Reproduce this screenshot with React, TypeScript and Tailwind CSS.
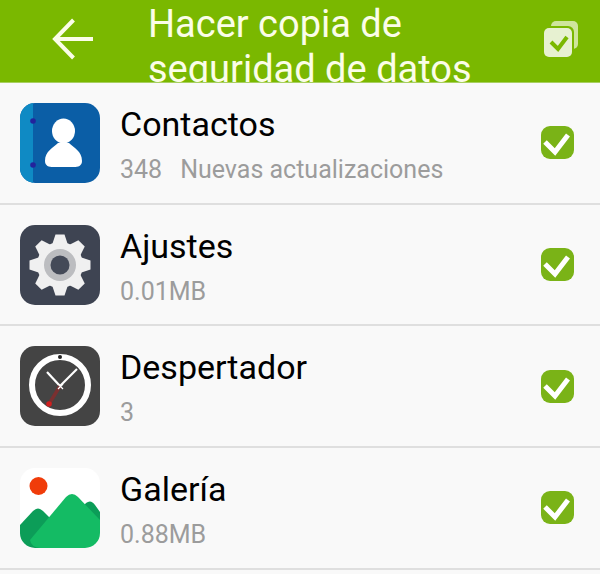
const rows = [
  { name: "Contactos", count: "348", note: "Nuevas actualizaciones", icon: <ContactsIcon /> },
  { name: "Ajustes", count: "0.01MB", icon: <SettingsIcon /> },
  { name: "Despertador", count: "3", icon: <ClockIcon /> },
  { name: "Galería", count: "0.88MB", icon: <GalleryIcon /> },
];

function ContactsIcon() {
  return (
    <svg viewBox="0 0 80 80" className="w-20 h-20 shrink-0">
      <rect width="80" height="80" rx="15" fill="#0b5ea6" />
      <path d="M15 0 A15 15 0 0 0 0 15 V65 A15 15 0 0 0 15 80 V80 H13 V0 Z" fill="#0f8ac4" />
      <circle cx="13" cy="18" r="2.8" fill="#23239c" />
      <circle cx="13" cy="62" r="2.8" fill="#23239c" />
      <ellipse cx="43.500" cy="28" rx="11.500" ry="12.500" fill="#fff" />
      <path d="M25 58 C25 48 33 45 38 40 H49 C54 45 62 48 62 58 C62 63 58 64 54 64 H33 C29 64 25 63 25 58 Z" fill="#fff" />
    </svg>
  );
}

function SettingsIcon() {
  const teeth = [0, 45, 90, 135, 180, 225, 270, 315];
  return (
    <svg viewBox="0 0 80 80" className="w-20 h-20 shrink-0">
      <rect width="80" height="80" rx="15" fill="#3e4452" />
      {teeth.map((a) => (
        <path key={a} d="M35.500 9.500 H44.500 L48 20 H32 Z" fill="#f0f0f0" transform={`rotate(${a} 40 40)`} />
      ))}
      <circle cx="40" cy="40" r="23" fill="#f0f0f0" />
      <circle cx="40" cy="40" r="16" fill="#bcbdc0" />
      <circle cx="40" cy="40" r="9.500" fill="#444a58" />
    </svg>
  );
}

function ClockIcon() {
  return (
    <svg viewBox="0 0 80 80" className="w-20 h-20 shrink-0">
      <rect width="80" height="80" rx="15" fill="#444444" />
      <circle cx="40" cy="39" r="28" fill="none" stroke="#fff" strokeWidth="6" />
      <circle cx="40" cy="11" r="2" fill="#222" />
      <path d="M40 40 L27 26" stroke="#fff" strokeWidth="2.200" />
      <path d="M40 40 L57 23" stroke="#fff" strokeWidth="2.200" />
      <path d="M40 40 L29 58" stroke="#7a3030" strokeWidth="3.500" />
      <circle cx="29" cy="58" r="2.800" fill="#d01f1f" />
      <path d="M38 38 L43 43 M43 38 L38 43" stroke="#fff" strokeWidth="1.200" />
    </svg>
  );
}

function GalleryIcon() {
  return (
    <svg viewBox="0 0 80 80" className="w-20 h-20 shrink-0">
      <rect width="80" height="80" rx="15" fill="#fff" />
      <circle cx="18.500" cy="18" r="9" fill="#f03c0a" />
      <path d="M0 57 L13 43 Q18 38 23 43 L38 58 L30 80 H15 A15 15 0 0 1 0 65 Z" fill="#0c9d58" />
      <path d="M60 42 L66 35 Q71 31 75 37 L80 44 V65 L70 60 Z" fill="#0c9d58" />
      <path d="M10 72 L46 29 Q52 23 58 29 L80 52 V65 A15 15 0 0 1 65 80 H20 Q11 79 10 72 Z" fill="#14bb64" />
    </svg>
  );
}

export default function App() {
  return (
    <div className="w-[600px] h-[574px] overflow-hidden bg-[#f9f9f9] font-['Roboto',sans-serif]">
      {/* Header bar */}
      <div className="h-[83px] bg-[#7ab800] border-b border-[#a8cf60] flex items-start overflow-hidden">
        <svg viewBox="0 0 42 42" className="w-[42px] h-[42px] ml-[52px] mt-[18px] shrink-0">
          <path d="M3 21 H41 M21.500 2 L3 21 L21.500 40" fill="none" stroke="#fbfde8" strokeWidth="4" />
        </svg>
        <div className="ml-[54px] mt-[2px] w-[340px] text-[38px] leading-[45px] text-[#fbfde8]">
          Hacer copia de seguridad de datos
        </div>
        <div className="relative w-[34px] h-[36px] ml-auto mr-[22px] mt-[21px] shrink-0">
          <div className="absolute right-0 top-0 w-[27px] h-[28px] rounded-[5px] bg-[#cfe59c]" />
          <div className="absolute left-0 bottom-0 w-[30px] h-[31px] rounded-[6px] bg-[#7ab800]" />
          <div className="absolute left-0 bottom-0 w-[28px] h-[29px] rounded-[5px] bg-[#e7f1d1]">
            <svg viewBox="0 0 28 29" className="w-full h-full">
              <path d="M7 14 L14 21 L23 9" fill="none" stroke="#7ab800" strokeWidth="4" />
            </svg>
          </div>
        </div>
      </div>

      {/* App list */}
      {rows.map((row) => (
        <div key={row.name} className="h-[121.7px] border-b-2 border-[#dfdfdf] pl-5 pr-[26px] flex items-center">
          {row.icon}
          <div className="ml-5 pt-1 flex-1">
            <div className="text-[34px] leading-[40px] text-black">{row.name}</div>
            <div className="mt-[10px] flex gap-[18px] text-[25px] leading-[32px] text-[#9c9c9c]">
              <span>{row.count}</span>
              {row.note && <span>{row.note}</span>}
            </div>
          </div>
          <div className="w-[33px] h-[33px] rounded-[9px] bg-[#7ab317]">
            <svg viewBox="0 0 33 33" className="w-full h-full">
              <path d="M4 16 L14 26 L27 9" fill="none" stroke="#ffffff" strokeWidth="5" />
            </svg>
          </div>
        </div>
      ))}
    </div>
  );
}
